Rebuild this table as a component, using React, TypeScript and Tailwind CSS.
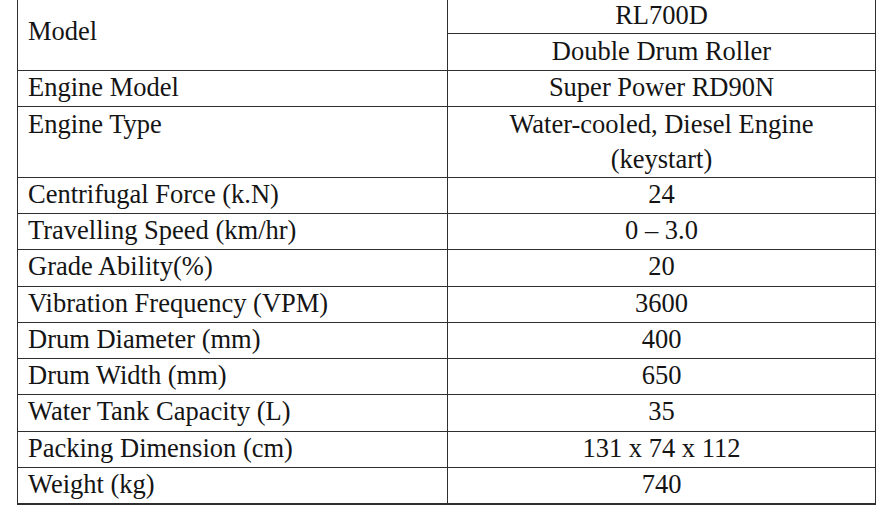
const rows: [string, string][] = [
  ['Centrifugal Force (k.N)', '24'],
  ['Travelling Speed (km/hr)', '0 – 3.0'],
  ['Grade Ability(%)', '20'],
  ['Vibration Frequency (VPM)', '3600'],
  ['Drum Diameter (mm)', '400'],
  ['Drum Width (mm)', '650'],
  ['Water Tank Capacity (L)', '35'],
  ['Packing Dimension (cm)', '131 x 74 x 112'],
  ['Weight (kg)', '740'],
];

function Row({ label, value }: { label: string; value: string }) {
  return (
    <div className="flex h-[36.25px] border-b border-[#2e2e2e] leading-[33px]">
      <div className="w-[430px] shrink-0 border-r border-[#2e2e2e] pl-[10px]">{label}</div>
      <div className="flex-1 text-center">{value}</div>
    </div>
  );
}

export default function App() {
  return (
    <div className="h-[512px] w-[886px] overflow-hidden bg-white">
      <div className="ml-[17px] mt-[-3px] w-[859px] border border-[#2e2e2e] text-[26.5px] leading-[35px] text-[#141414] [font-family:'Liberation_Serif','Times_New_Roman',serif]">
        <div className="flex border-b border-[#2e2e2e]">
          <div className="flex w-[430px] shrink-0 items-center border-r border-[#2e2e2e] pb-[4px] pl-[10px]">Model</div>
          <div className="flex-1 text-center leading-[34px]">
            <div className="h-[36.25px] border-b border-[#2e2e2e]">RL700D</div>
            <div className="h-[35.25px]">Double Drum Roller</div>
          </div>
        </div>
        <Row label="Engine Model" value="Super Power RD90N" />
        <div className="flex h-[71px] border-b border-[#2e2e2e]">
          <div className="w-[430px] shrink-0 border-r border-[#2e2e2e] pl-[10px]">Engine Type</div>
          <div className="flex-1 text-center">
            <div>Water-cooled, Diesel Engine</div>
            <div>(keystart)</div>
          </div>
        </div>
        {rows.map(([l, v]) => (
          <Row key={l} label={l} value={v} />
        ))}
      </div>
    </div>
  );
}
